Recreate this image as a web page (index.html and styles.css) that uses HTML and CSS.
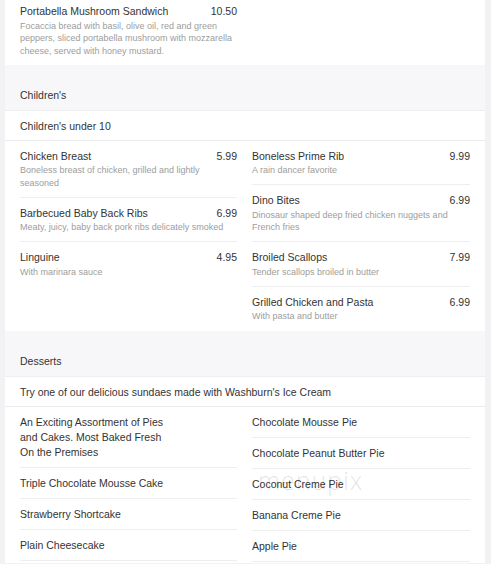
FILE: index.html
```
<!DOCTYPE html>
<html>
<head>
<meta charset="utf-8">
<link rel="stylesheet" href="styles.css">
</head>
<body>
<div class="page">
  <section class="card card-top">
    <div class="grid">
      <div class="col">
        <div class="item">
          <div class="item-head"><span class="name">Portabella Mushroom Sandwich</span><span class="price">10.50</span></div>
          <div class="desc">Focaccia bread with basil, olive oil, red and green peppers, sliced portabella mushroom with mozzarella cheese, served with honey mustard.</div>
        </div>
      </div>
      <div class="col"></div>
    </div>
  </section>

  <section class="card">
    <div class="sec-head">Children's</div>
    <div class="sec-note">Children's under 10</div>
    <div class="grid">
      <div class="col">
        <div class="item">
          <div class="item-head"><span class="name">Chicken Breast</span><span class="price">5.99</span></div>
          <div class="desc">Boneless breast of chicken, grilled and lightly seasoned</div>
        </div>
        <div class="item">
          <div class="item-head"><span class="name">Barbecued Baby Back Ribs</span><span class="price">6.99</span></div>
          <div class="desc">Meaty, juicy, baby back pork ribs delicately smoked</div>
        </div>
        <div class="item">
          <div class="item-head"><span class="name">Linguine</span><span class="price">4.95</span></div>
          <div class="desc">With marinara sauce</div>
        </div>
      </div>
      <div class="col">
        <div class="item">
          <div class="item-head"><span class="name">Boneless Prime Rib</span><span class="price">9.99</span></div>
          <div class="desc">A rain dancer favorite</div>
        </div>
        <div class="item">
          <div class="item-head"><span class="name">Dino Bites</span><span class="price">6.99</span></div>
          <div class="desc">Dinosaur shaped deep fried chicken nuggets and French fries</div>
        </div>
        <div class="item">
          <div class="item-head"><span class="name">Broiled Scallops</span><span class="price">7.99</span></div>
          <div class="desc">Tender scallops broiled in butter</div>
        </div>
        <div class="item">
          <div class="item-head"><span class="name">Grilled Chicken and Pasta</span><span class="price">6.99</span></div>
          <div class="desc">With pasta and butter</div>
        </div>
      </div>
    </div>
  </section>

  <section class="card">
    <div class="sec-head">Desserts</div>
    <div class="sec-note">Try one of our delicious sundaes made with Washburn's Ice Cream</div>
    <div class="grid">
      <div class="col">
        <div class="item simple">An Exciting Assortment of Pies<br>and Cakes. Most Baked Fresh<br>On the Premises</div>
        <div class="item simple">Triple Chocolate Mousse Cake</div>
        <div class="item simple">Strawberry Shortcake</div>
        <div class="item simple">Plain Cheesecake</div>
      </div>
      <div class="col watermark-host">
        <div class="item simple">Chocolate Mousse Pie</div>
        <div class="item simple">Chocolate Peanut Butter Pie</div>
        <div class="item simple">Coconut Creme Pie</div>
        <div class="item simple">Banana Creme Pie</div>
        <div class="item simple">Apple Pie</div>
        <span class="watermark">menupix</span>
      </div>
    </div>
  </section>
</div>
</body>
</html>
```
FILE: styles.css
```
html, body {
  margin: 0;
  padding: 0;
}
body {
  background: #f2f2f5;
  font-family: "Liberation Sans", Arial, sans-serif;
  color: #333;
  overflow: hidden;
}
.page {
  margin-left: 5px;
  width: 480px;
}
.card {
  background: #fff;
}
.card-top {
  margin-top: -4px;
}
.card-top .grid {
  padding-bottom: 0;
}
.sec-head {
  background: #f7f7fa;
  padding: 23px 15px 8px;
  font-size: 10.5px;
  line-height: 14px;
  color: #333;
  border-bottom: 1px solid #eeeef1;
}
.sec-note {
  padding: 8px 15px 7px;
  font-size: 10.5px;
  line-height: 14px;
  color: #333;
  border-bottom: 1px solid #ececef;
}
.grid {
  display: grid;
  grid-template-columns: 217px 218px;
  column-gap: 15px;
  padding: 0 15px 1px;
}
.col {
  display: flex;
  flex-direction: column;
}
.watermark-host {
  position: relative;
}
.item {
  padding: 8px 0 7.5px;
  border-bottom: 1px solid #eeeeee;
}
.item:last-child {
  border-bottom: none;
}
.item-head {
  display: flex;
  justify-content: space-between;
  font-size: 10.5px;
  line-height: 14px;
  color: #333;
}
.desc {
  margin-top: 1.5px;
  font-size: 9px;
  line-height: 12.5px;
  color: #9d9d9d;
}
.item.simple {
  padding: 8px 0 7px;
  font-size: 10.5px;
  line-height: 15px;
  color: #333;
  border-bottom: 1px solid #eeeeee;
}
.watermark {
  position: absolute;
  left: 6px;
  top: 56px;
  font-size: 25px;
  letter-spacing: 1px;
  color: rgba(0, 0, 0, 0.12);
  font-family: "Open Sans", "Liberation Sans", sans-serif;
  font-weight: 300;
  pointer-events: none;
}
```
